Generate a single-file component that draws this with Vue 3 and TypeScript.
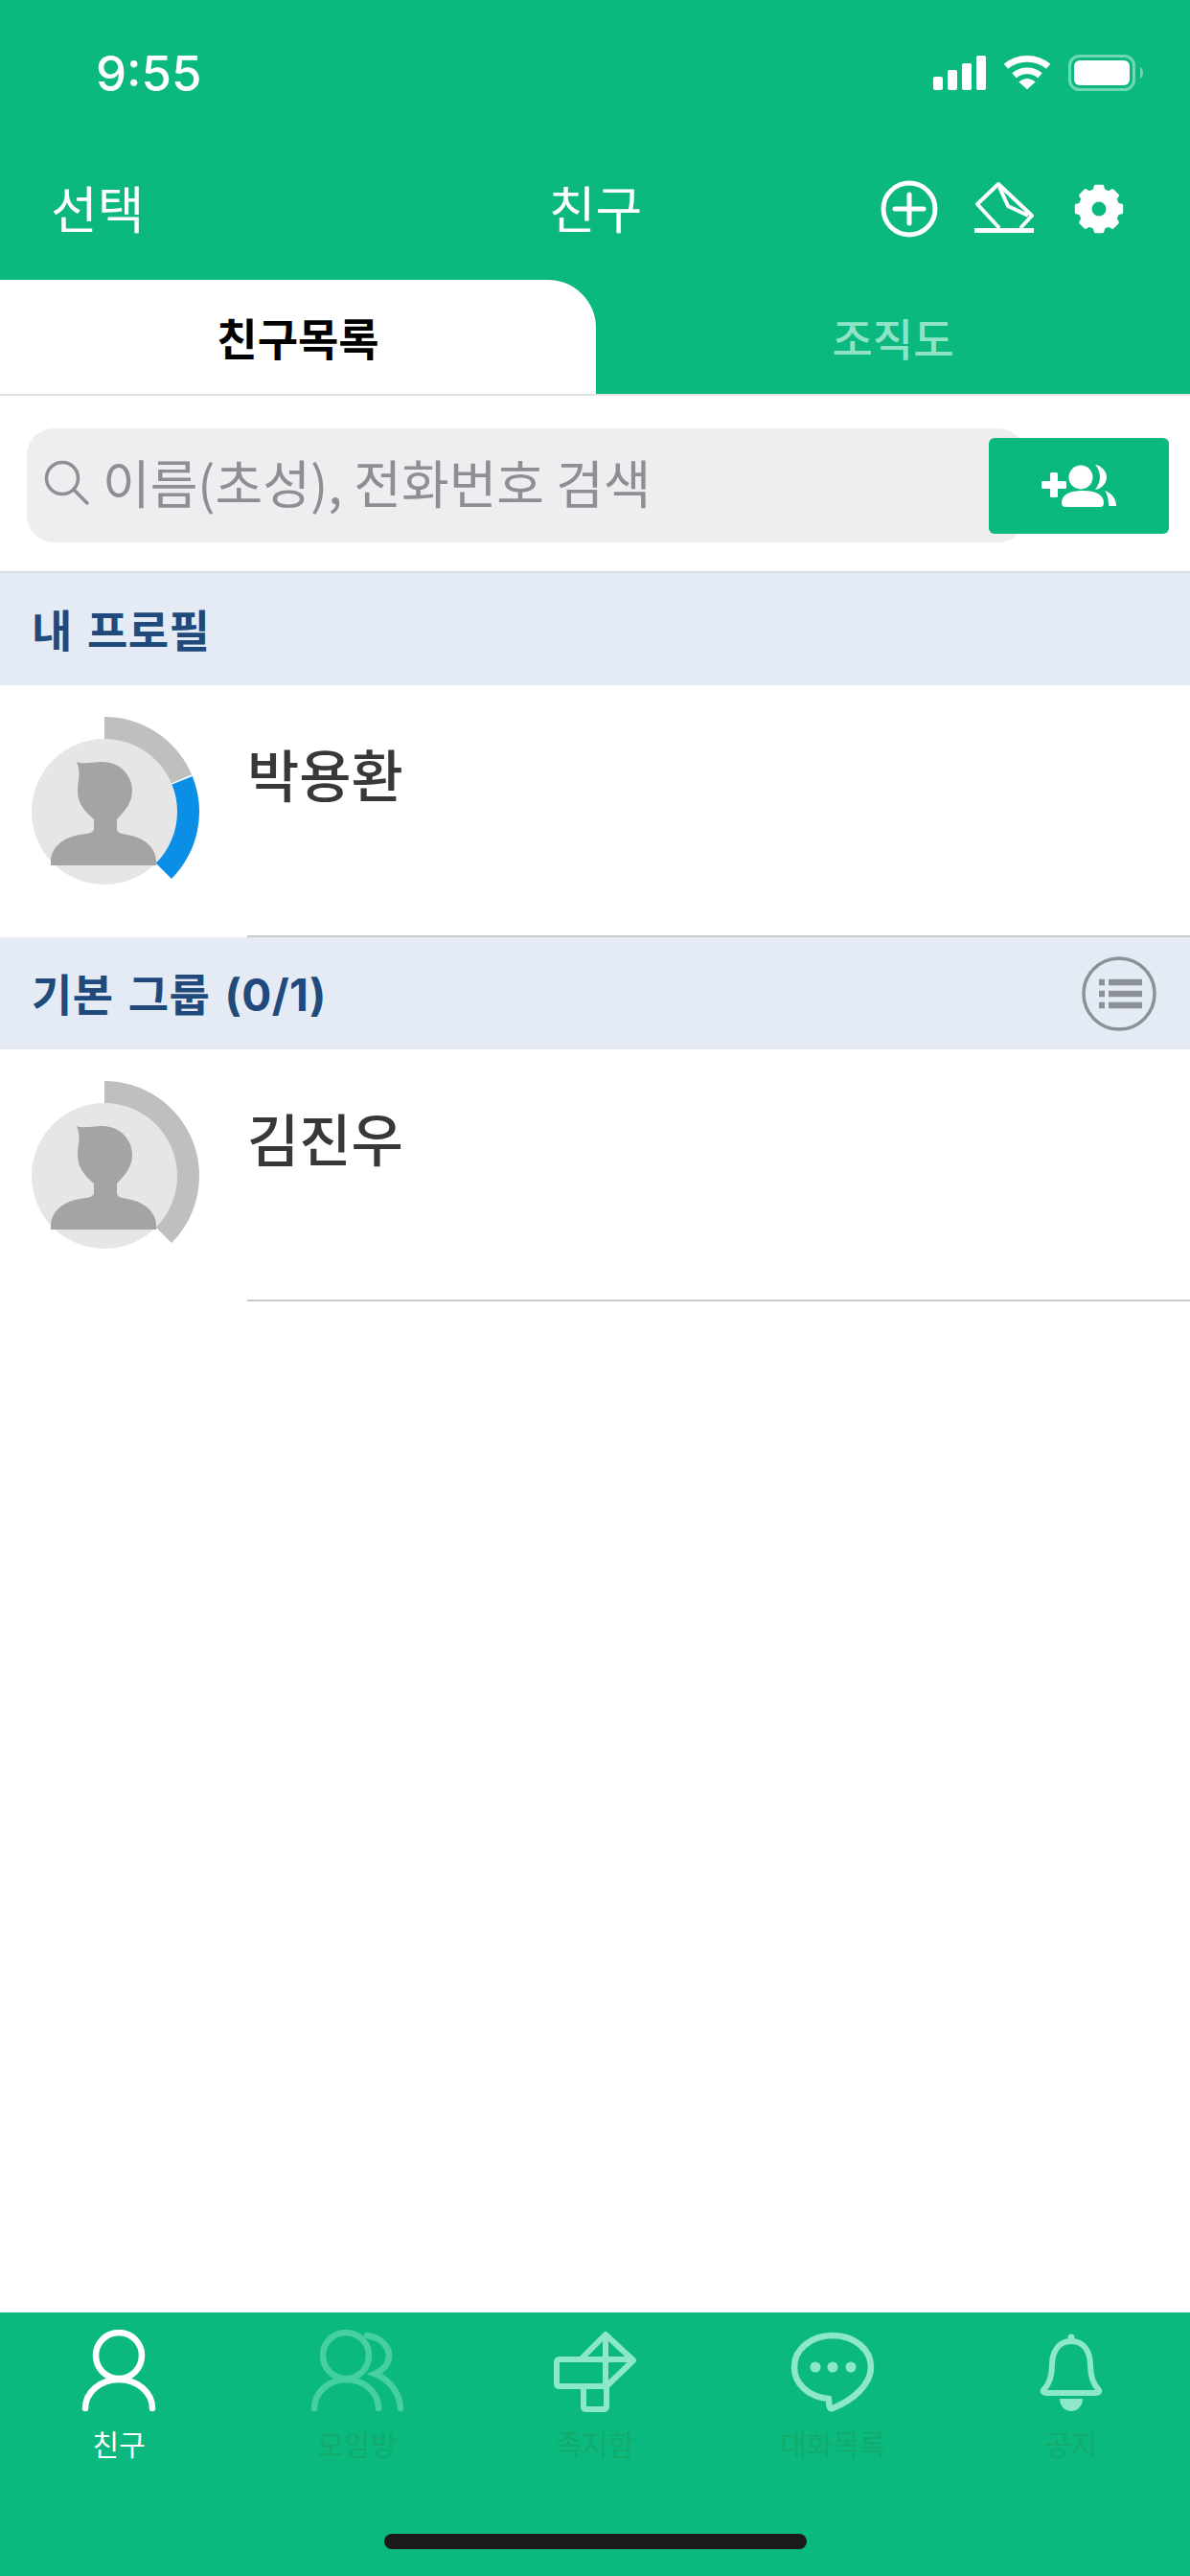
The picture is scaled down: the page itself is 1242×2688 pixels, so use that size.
<template>
  <div class="screen">
    <div class="status-bar">
      <span class="time">9:55</span>
      <div class="status-icons">
        <svg width="58" height="38" viewBox="0 0 58 38" fill="#fff">
          <rect x="3" y="23" width="10" height="14" rx="2" />
          <rect x="18" y="16" width="10" height="21" rx="2" />
          <rect x="33" y="9" width="10" height="28" rx="2" />
          <rect x="48" y="1" width="10" height="36" rx="2" />
        </svg>
        <svg width="50" height="38" viewBox="0 0 52 38" fill="none" stroke="#fff" stroke-width="7">
          <path d="M3 12 C16 1 36 1 49 12" />
          <path d="M12 22 C20 15 32 15 40 22" />
          <path d="M26 37 L17 29 C23 24 29 24 35 29 Z" fill="#fff" stroke="none" />
        </svg>
        <svg width="80" height="38" viewBox="0 0 80 38" fill="none">
          <rect x="1.5" y="1.5" width="67" height="35" rx="10" stroke="#6fd9b5" stroke-width="3" />
          <rect x="6" y="6" width="58" height="26" rx="6" fill="#fff" />
          <path d="M75 13 C79 15 79 23 75 25 Z" fill="#6fd9b5" />
        </svg>
      </div>
    </div>

    <header class="top-bar">
      <span class="top-select">선택</span>
      <span class="top-title">친구</span>
      <div class="top-actions">
        <svg width="70" height="70" viewBox="0 0 70 70" fill="none" stroke="#fff" stroke-width="5">
          <circle cx="37" cy="35" r="27" />
          <path d="M37 20 V50 M22 35 H52" stroke-linecap="round" />
        </svg>
        <svg width="70" height="70" viewBox="0 0 70 70" fill="none" stroke="#fff" stroke-width="4">
          <path d="M31 55 L8 30 L30 9 L65 42 L53 55" stroke-linejoin="round" />
          <path d="M31 12 L40 32 L61 42" stroke-linejoin="round" />
          <path d="M5 57.5 H67" stroke-width="5" />
        </svg>
        <svg width="70" height="70" viewBox="0 0 70 70">
          <path :d="gearPath" fill="#fff" fill-rule="evenodd" stroke="#fff" stroke-width="3" stroke-linejoin="round" />
        </svg>
      </div>
    </header>

    <nav class="tabs">
      <div class="tab tab-active">친구목록</div>
      <div class="tab">조직도</div>
    </nav>

    <div class="search-area">
      <div class="search-box">
        <svg width="48" height="48" viewBox="0 0 48 48" fill="none" stroke="#8e8e93" stroke-width="3.5">
          <circle cx="19" cy="20" r="16.5" />
          <path d="M31 32 L45 46" stroke-linecap="round" />
        </svg>
        <span>이름(초성), 전화번호 검색</span>
      </div>
      <button class="add-btn">
        <svg width="80" height="44" viewBox="0 0 80 44" fill="#fff">
          <rect x="1" y="17" width="26" height="8" rx="1.5" />
          <rect x="10" y="8" width="8" height="26" rx="1.5" />
          <circle cx="42" cy="13" r="12.5" />
          <path d="M57 0 C64 1 69 7 69 13 C69 19 64 25 57 26 C60 22 62 18 62 13 C62 8 60 3 57 0 Z" />
          <path d="M22 40 C22 31 30 27 44 27 C58 27 66 31 66 40 Q66 44 62 44 H26 Q22 44 22 40 Z" />
          <path d="M67 27 C75 30 79 36 79 43 H71 C71 36 70 31 67 27 Z" />
        </svg>
      </button>
    </div>

    <section v-for="group in groups" :key="group.title">
      <div class="section-head">
        <span class="section-title">{{ group.title }}</span>
        <svg v-if="group.hasMenu" width="80" height="80" viewBox="0 0 80 80" fill="none" stroke="#8b9099">
          <circle cx="40" cy="40" r="37" stroke-width="3.5" />
          <path d="M19 28 H25 M19 40 H25 M19 52 H25 M29 28 H64 M29 40 H64 M29 52 H64" stroke-width="6.5" />
        </svg>
      </div>
      <div v-for="person in group.members" :key="person.name" class="friend-row">
        <svg class="avatar" width="200" height="200" viewBox="0 0 200 200">
          <path :d="arcPath(0, person.greyEnd)" fill="#bfbfbf" />
          <path v-if="person.blueEnd" :d="arcPath(person.greyEnd + 1, person.blueEnd)" fill="#0b8fe6" />
          <circle cx="100" cy="100" r="76" fill="#e6e6e6" />
          <path
            d="M71 48 C78 51 86 48 98 48 C116 48 129 62 129 78 C129 92 120 100 113 108 L113 118 C113 122 118 123 124 124 C142 127 154 138 154 152 L154 156 L44 156 L44 152 C44 138 56 127 74 124 C82 123 89 122 89 118 L89 108 C80 100 72 92 72 78 C72 68 76 60 71 48 Z"
            fill="#a4a4a4"
          />
        </svg>
        <div class="row-body">
          <span class="friend-name">{{ person.name }}</span>
        </div>
      </div>
    </section>

    <div class="spacer"></div>

    <footer class="bottom-bar">
      <div class="bottom-tabs">
        <div class="bottom-tab bottom-tab-active">
          <svg width="100" height="88" viewBox="0 0 100 88" fill="none" stroke="#fff" stroke-width="6.5" stroke-linecap="round">
            <circle cx="50" cy="27" r="24" />
            <path d="M15 82 A35 30 0 0 1 85 82" />
          </svg>
          <span>친구</span>
        </div>
        <div class="bottom-tab">
          <svg width="100" height="88" viewBox="0 0 100 88" fill="none" stroke="#45cfa3" stroke-width="6.5" stroke-linecap="round">
            <circle cx="38" cy="27" r="24" />
            <path d="M5 82 A33.5 30 0 0 1 72 82" />
            <path d="M60 6 C75 8 83 18 83 27 C83 36 77 42 68 46 C84 52 94 66 95 82" />
          </svg>
          <span>모임방</span>
        </div>
        <div class="bottom-tab">
          <svg width="100" height="88" viewBox="0 0 100 88" fill="none" stroke="#8de8cb" stroke-width="6" stroke-linecap="round" stroke-linejoin="round">
            <path d="M37 29 L61 5 L90 32 L62 59 M61 5 V59" />
            <path d="M88 31 H13 Q10 31 10 34 V56 Q10 59 13 59 H62" />
            <path d="M38 59 V80 Q38 83 41 83 H59 Q62 83 62 80 V59" />
          </svg>
          <span>족지함</span>
        </div>
        <div class="bottom-tab">
          <svg width="100" height="88" viewBox="0 0 100 88" fill="none" stroke="#8de8cb" stroke-width="6.5" stroke-linejoin="round">
            <path d="M46 72 C24 70 10 56 10 39 C10 20 28 6 50 6 C72 6 90 20 90 39 C90 58 70 74 50 82 C47 83 46 80 46 72 Z" />
            <g fill="#8de8cb" stroke="none">
              <circle cx="32" cy="39" r="5.5" />
              <circle cx="50" cy="39" r="5.5" />
              <circle cx="69" cy="39" r="5.5" />
            </g>
          </svg>
          <span>대화목록</span>
        </div>
        <div class="bottom-tab">
          <svg width="100" height="88" viewBox="0 0 100 88" fill="none" stroke="#8de8cb" stroke-width="6" stroke-linejoin="round">
            <path d="M50 12 C36 12 30 24 30 37 C30 50 26 58 21 63 Q20 66 24 66 H76 Q80 66 79 63 C74 58 70 50 70 37 C70 24 64 12 50 12 Z" />
            <circle cx="50" cy="8" r="3.5" fill="#8de8cb" stroke="none" />
            <path d="M38 72 A12 13 0 0 0 62 72 Z" fill="#8de8cb" stroke="none" />
          </svg>
          <span>공지</span>
        </div>
      </div>
      <div class="home-indicator"></div>
    </footer>
  </div>
</template>

<script setup lang="ts">
interface Member {
  name: string
  greyEnd: number
  blueEnd?: number
}

interface Group {
  title: string
  hasMenu: boolean
  members: Member[]
}

const groups: Group[] = [
  {
    title: '내 프로필',
    hasMenu: false,
    members: [{ name: '박용환', greyEnd: 67, blueEnd: 135 }]
  },
  {
    title: '기본 그룹 (0/1)',
    hasMenu: true,
    members: [{ name: '김진우', greyEnd: 135 }]
  }
]

const polar = (radius: number, degrees: number) => {
  const rad = (degrees * Math.PI) / 180
  const x = 100 + radius * Math.sin(rad)
  const y = 100 - radius * Math.cos(rad)
  return `${x.toFixed(2)} ${y.toFixed(2)}`
}

// ring slice around the avatar, angles clockwise from the top
const arcPath = (start: number, end: number) => {
  const outer = 99
  const inner = 70
  return [
    `M${polar(outer, start)}`,
    `A${outer} ${outer} 0 0 1 ${polar(outer, end)}`,
    `L${polar(inner, end)}`,
    `A${inner} ${inner} 0 0 0 ${polar(inner, start)}`,
    'Z'
  ].join(' ')
}

const buildGear = () => {
  const teeth = 8
  const step = 360 / teeth
  const points: string[] = []
  for (let i = 0; i < teeth; i += 1) {
    const a = i * step
    const r = (radius: number, deg: number) => {
      const rad = (deg * Math.PI) / 180
      return `${(35 + radius * Math.sin(rad)).toFixed(2)} ${(35 - radius * Math.cos(rad)).toFixed(2)}`
    }
    points.push(r(20, a - 14), r(24, a - 9), r(24, a + 9), r(20, a + 14))
  }
  const hole = 'M35 26 A9 9 0 1 0 35 44 A9 9 0 1 0 35 26 Z'
  return `M${points.join(' L')} Z ${hole}`
}

const gearPath = buildGear()
</script>

<style>
html,
body {
  margin: 0;
  background: #fff;
}
</style>

<style scoped>
.screen {
  width: 1242px;
  height: 2688px;
  display: flex;
  flex-direction: column;
  overflow: hidden;
  background: #fff;
  font-family: "Noto Sans CJK KR", "Noto Sans", sans-serif;
}

.status-bar {
  height: 150px;
  box-sizing: border-box;
  padding: 50px 47px 0 100px;
  display: flex;
  justify-content: space-between;
  align-items: flex-start;
  background: #0bb97f;
  color: #fff;
}

.time {
  font-family: Inter, "Liberation Sans", sans-serif;
  font-size: 51px;
  font-weight: 500;
  line-height: 54px;
}

.status-icons {
  display: flex;
  align-items: center;
  gap: 18px;
  margin-top: 7px;
}

.top-bar {
  height: 142px;
  box-sizing: border-box;
  padding: 0 52px 6px 53px;
  display: grid;
  grid-template-columns: 1fr auto 1fr;
  align-items: center;
  background: #0bb97f;
  color: #fff;
}

.top-select,
.top-title {
  padding-bottom: 5px;
  font-size: 53px;
  line-height: 70px;
}

.top-actions {
  display: flex;
  justify-content: flex-end;
  gap: 30px;
  margin-right: 8px;
}

.tabs {
  display: grid;
  grid-template-columns: 622px 1fr;
  height: 121px;
  box-sizing: border-box;
  background: #0bb97f;
  border-bottom: 2px solid #dfe3e6;
}

.tab {
  display: flex;
  align-items: center;
  justify-content: center;
  padding-bottom: 2px;
  font-size: 46px;
  font-weight: 500;
  color: #8fe3c7;
}

.tab-active {
  background: #fff;
  color: #000;
  font-weight: 700;
  border-top-right-radius: 50px;
}

.search-area {
  height: 185px;
  box-sizing: border-box;
  padding: 34px 22px 30px 28px;
  display: flex;
  align-items: center;
  border-bottom: 2px solid #d8dde6;
}

.search-box {
  flex: 1;
  height: 119px;
  box-sizing: border-box;
  padding: 0 0 8px 18px;
  display: flex;
  align-items: center;
  gap: 13px;
  background: #eeeef0;
  border-radius: 28px;
  font-size: 54px;
  color: #8e8e93;
}

.add-btn {
  width: 188px;
  height: 100px;
  margin-left: -38px;
  padding: 0;
  flex: none;
  display: flex;
  align-items: center;
  justify-content: center;
  background: #0bb97f;
  border: none;
  border-radius: 6px;
}

.section-head {
  height: 117px;
  box-sizing: border-box;
  padding: 0 34px 0 33px;
  display: flex;
  align-items: center;
  justify-content: space-between;
  background: #e4ebf5;
}

.section-title {
  padding-bottom: 3px;
  font-family: Inter, "Noto Sans CJK KR", sans-serif;
  font-size: 46px;
  font-weight: 700;
  word-spacing: 4px;
  letter-spacing: 0.4px;
  color: #204a7c;
}

.friend-row {
  height: 263px;
  padding-left: 9px;
  display: flex;
  align-items: flex-start;
}

.avatar {
  flex: none;
  margin-top: 32px;
}

.row-body {
  flex: 1;
  height: 263px;
  box-sizing: border-box;
  margin-left: 49px;
  border-bottom: 2px solid #c6cacd;
}

.friend-name {
  display: block;
  margin-top: 50px;
  font-size: 59px;
  line-height: 84px;
  font-weight: 500;
  color: #383838;
}

.spacer {
  flex: 1;
}

.bottom-bar {
  height: 275px;
  box-sizing: border-box;
  padding-top: 18px;
  display: flex;
  flex-direction: column;
  align-items: center;
  background: #0bb97f;
}

.bottom-tabs {
  width: 100%;
  display: grid;
  grid-template-columns: repeat(5, 1fr);
}

.bottom-tab {
  display: flex;
  flex-direction: column;
  align-items: center;
  gap: 10px;
  font-size: 30px;
  line-height: 40px;
  color: #12ab6c;
}

.bottom-tab-active {
  color: #fff;
}

.home-indicator {
  width: 441px;
  height: 16px;
  margin-top: 75px;
  border-radius: 8px;
  background: #1a1a1a;
}
</style>
